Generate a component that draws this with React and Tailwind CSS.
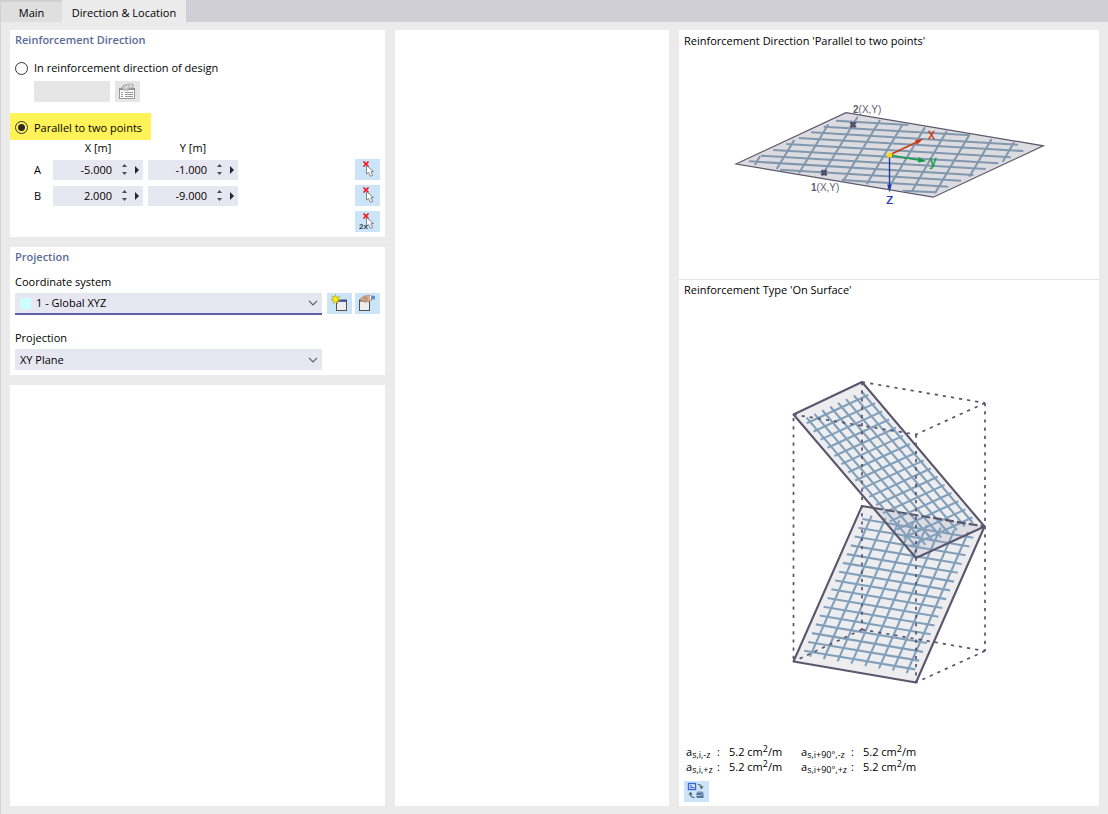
import React from "react";

const range = (n) => Array.from({ length: n }, (_, i) => i);

function Panel({ className = "", children, ...rest }) {
  return (
    <section className={`bg-white ${className}`} {...rest}>
      {children}
    </section>
  );
}

function PanelTitle({ children }) {
  return <h2 className="text-[11px] leading-[19px] font-semibold text-[#5b6c98]">{children}</h2>;
}

function IconButton({ label, disabled = false, children }) {
  return (
    <button
      type="button"
      aria-label={label}
      disabled={disabled}
      className="flex h-[21px] w-[25px] shrink-0 items-center justify-center bg-[#cce4f7] disabled:bg-[#e6e6e6]"
    >
      {children}
    </button>
  );
}

function PickIcon({ twice = false }) {
  return (
    <svg width="25" height="21" viewBox="0 0 25 21" aria-hidden="true">
      <path d="M8.500 2.500l5 5M13.500 2.500l-5 5" stroke="#f7a3a8" strokeWidth="2.200" />
      <path d="M8.500 2.500l5 5M13.500 2.500l-5 5" stroke="#e0101c" strokeWidth="1.200" />
      <path d="M11.500 6.500v8.500l2-1.500 2 3.800 2.200-1-1.900-3.600 2.700-.200z" fill="#fff" stroke="#85858d" strokeWidth="1" />
      {twice && (
        <text x="4" y="18" fontSize="8" fontWeight="700" fill="#3b4450" fontFamily="Liberation Sans, sans-serif">
          2x
        </text>
      )}
    </svg>
  );
}

function NewWindowIcon() {
  return (
    <svg width="25" height="21" viewBox="0 0 25 21" aria-hidden="true">
      <rect x="9.500" y="7.500" width="10" height="10" fill="#ededed" stroke="#55514f" />
      <path d="M9 7.500h11" stroke="#55514f" strokeWidth="2" />
      <path d="M11 8h8" stroke="#3b49c4" strokeWidth="1.400" />
      <path d="M8.500 1.500l1.100 3 3-1.200-1.600 2.600 2.500 1.300-3 .400.300 3-2.100-2.100-2.200 1.900.300-3-2.800-.500 2.500-1.300-1.500-2.400 2.700.900z" fill="#fff200" stroke="#a8981c" strokeWidth=".6" />
    </svg>
  );
}

function EditWindowIcon() {
  return (
    <svg width="25" height="21" viewBox="0 0 25 21" aria-hidden="true">
      <rect x="4.500" y="7.500" width="10" height="10" fill="#ededed" stroke="#55514f" />
      <path d="M4 7.500h11" stroke="#55514f" strokeWidth="2" />
      <path d="M5 6l4-3 6-.500 2 1v3.500l-2 .500-1 1.500-2-.500-2 1-1-2-3 .500z" fill="#d9ae8c" stroke="#96755e" strokeWidth=".6" />
      <path d="M8 5.500l4-1M10 7.500l3-1.500" stroke="#8b6a55" strokeWidth=".7" />
      <path d="M16 2.500l4 .500v3.500l-4-.500z" fill="#5c8fd6" />
      <path d="M15.500 2.500v4" stroke="#fff" strokeWidth="1" />
    </svg>
  );
}

function LibraryIcon() {
  return (
    <svg width="25" height="21" viewBox="0 0 25 21" aria-hidden="true">
      <rect x="4.500" y="7.500" width="15" height="10" fill="#fafafa" stroke="#999" />
      <path d="M4 8h16" stroke="#8f8f8f" strokeWidth="2" />
      <path d="M6 11.500h2M6 13.500h2M6 15.500h2M10 11.500h8M10 13.500h8M10 15.500h8" stroke="#999" strokeWidth="1" />
      <path d="M6 7l3-3 5-1 4 0v4l-4 .500-1 2-2-.500-2 .500-1-1.500z" fill="#c4c4c4" stroke="#989898" strokeWidth=".6" />
      <path d="M10 7l3-2M16 3v3.500" stroke="#f4f4f4" strokeWidth="1" />
    </svg>
  );
}

function SwitchViewIcon() {
  return (
    <svg width="25" height="21" viewBox="0 0 25 21" aria-hidden="true">
      <rect x="4.500" y="2.500" width="7" height="6" fill="#dcebff" stroke="#3a63d8" strokeWidth="1.400" />
      <path d="M7 4v2.500h3" fill="none" stroke="#3a63d8" strokeWidth="1.200" />
      <path d="M14 3.500c2.500 0 3.500 1 3.500 3" fill="none" stroke="#56606e" strokeWidth="1.200" />
      <path d="M15.300 5.500h4.400l-2.200 2.800z" fill="#56606e" />
      <path d="M6.500 13c0 2 1 3.500 4 3.500" fill="none" stroke="#56606e" strokeWidth="1.200" />
      <path d="M4.300 13.500h4.400l-2.200-2.800z" fill="#56606e" />
      <path d="M13 10.500h5l1.500 1.500v5h-6l-1.500-1.500z" fill="#56749f" />
      <path d="M12 14.500h5l2.500-2.500M13 11h5" fill="none" stroke="#c3d2e8" strokeWidth=".8" />
    </svg>
  );
}

function NumberField({ label, value }) {
  return (
    <div className="flex h-5 w-[90px] items-center bg-[#e7e7f1]">
      <input
        type="text"
        aria-label={label}
        defaultValue={value}
        className="h-5 w-[59px] bg-transparent text-right outline-none"
      />
      <div className="ml-2 flex w-2 flex-col items-center gap-1">
        <button type="button" aria-label={`Increase ${label}`} className="flex h-1 w-2 items-center justify-center">
          <svg width="5" height="3" viewBox="0 0 5 3" aria-hidden="true">
            <path d="M0 3L2.500 0 5 3z" fill="#4a4a52" />
          </svg>
        </button>
        <button type="button" aria-label={`Decrease ${label}`} className="flex h-1 w-2 items-center justify-center">
          <svg width="5" height="3" viewBox="0 0 5 3" aria-hidden="true">
            <path d="M0 0L2.500 3 5 0z" fill="#4a4a52" />
          </svg>
        </button>
      </div>
      <button type="button" aria-label={`More options for ${label}`} className="ml-[5px] flex h-5 w-2 items-center justify-center">
        <svg width="4" height="8" viewBox="0 0 4 8" aria-hidden="true">
          <path d="M0 0l4 4-4 4z" fill="#26262c" />
        </svg>
      </button>
    </div>
  );
}

function PointRow({ name, x, y, children }) {
  return (
    <div className="flex items-center gap-[5px] pl-[19px]">
      <div className="flex items-center">
        <span className="w-[19px]">{name}</span>
        <NumberField label={`${name} X [m]`} value={x} />
      </div>
      <NumberField label={`${name} Y [m]`} value={y} />
      <span className="flex-1" />
      {children}
    </div>
  );
}

function SelectBox({ id, options, swatch = false, className = "" }) {
  return (
    <div className={`relative flex w-[307px] items-center bg-[#e7e7f1] ${className}`}>
      {swatch && <span className="ml-[5px] h-[11px] w-[11px] shrink-0 bg-[#ccffff]" />}
      <select id={id} className="h-full w-full appearance-none bg-transparent px-[5px] outline-none">
        {options.map((o) => (
          <option key={o}>{o}</option>
        ))}
      </select>
      <svg className="pointer-events-none absolute right-1 h-[6px] w-[10px]" viewBox="0 0 10 6" aria-hidden="true">
        <path d="M1 .8l4 4 4-4" fill="none" stroke="#5c5c66" strokeWidth="1.200" />
      </svg>
    </div>
  );
}

function Radio({ id, label, ...rest }) {
  return (
    <span className="inline-flex items-center gap-[6px]">
      <input
        id={id}
        type="radio"
        name="direction"
        className="flex h-[13px] w-[13px] appearance-none items-center justify-center rounded-full border border-[#333] bg-white before:h-[7px] before:w-[7px] before:rounded-full checked:bg-[#fff25e] checked:before:bg-[#2e2c18]"
        {...rest}
      />
      <label htmlFor={id}>{label}</label>
    </span>
  );
}

const SLAB_ROWS = [
  [836, 120.7, 908.3, 125], [823.7, 126.7, 970, 135.3], [811, 132.3, 1018, 144.8], [798.7, 138, 1023.3, 151],
  [786.3, 144, 1010.7, 157.3], [773.3, 150, 998.3, 163.3], [761, 155.7, 985.7, 169], [749, 161.3, 973.3, 175],
  [780, 169.7, 961, 180.7], [841.7, 180, 948.3, 186.7], [902.7, 190.7, 935.7, 192.3],
];
const SLAB_COLS = [
  [760, 156, 755, 165], [794.3, 140, 776.7, 169], [828.3, 124.3, 799, 173.3], [857.7, 116.7, 824, 172.3],
  [880, 120, 843.3, 181], [902.3, 125, 866.7, 184.3], [925, 127.3, 888, 189], [946.7, 131, 911.7, 191.7],
  [969.3, 135, 935, 193.3], [991.7, 139, 969.3, 176.7], [1014, 142.3, 1002.7, 161.7],
];

function Segments({ items }) {
  return <path d={items.map(([a, b, c, d]) => `M${a} ${b}L${c} ${d}`).join("")} />;
}

function SlabFigure() {
  return (
    <svg className="mx-auto block h-[110px] w-[320px]" viewBox="729 98 320 110" role="img" aria-label="Reinforcement parallel to two points">
      <path d="M736 164L846 112.700 1043.300 145.800 933.300 197.200z" fill="#dcdce0" stroke="#5b566b" strokeWidth="1.200" />
      <g stroke="#8197ae" strokeWidth="2.100" fill="none">
        <Segments items={SLAB_ROWS} />
        <Segments items={SLAB_COLS} />
      </g>
      <path d="M850.500 122.200l5 5M855.500 122.200l-5 5M821.500 170.200l5 5M826.500 170.200l-5 5" stroke="#55506a" strokeWidth="3" />
      <g strokeWidth="1.400" fill="none">
        <path d="M889.500 155V189" stroke="#1f3ca6" />
        <path d="M889.500 155L918 160" stroke="#0f9b46" />
        <path d="M889.500 155L916 142.500" stroke="#c93a10" />
      </g>
      <path d="M887.200 184.500h4.600l-2.300 8z" fill="#1f3ca6" />
      <path d="M918.500 157.300l8 3.900-8.500 1.200z" fill="#0f9b46" />
      <path d="M915 140.300l8.500-1.600-6.300 5.900z" fill="#c93a10" />
      <circle cx="889.500" cy="155" r="2.600" fill="#ffdc00" />
      <g fontFamily="Liberation Sans, sans-serif">
        <g fontSize="10" fill="#625d70">
          <text x="853" y="113"><tspan fontWeight="700">2</tspan>(X,Y)</text>
          <text x="811" y="191"><tspan fontWeight="700">1</tspan>(X,Y)</text>
        </g>
        <text x="928" y="139" fontSize="14" fill="#c93a10" stroke="#c93a10" strokeWidth=".3">x</text>
        <text x="929.500" y="166" fontSize="14" fill="#0f9b46" stroke="#0f9b46" strokeWidth=".3">y</text>
        <text x="886" y="204" fontSize="15" fill="#1f3cb6" stroke="#1f3cb6" strokeWidth=".2">z</text>
      </g>
    </svg>
  );
}

const UPPER_SHORT = range(16).map((i) => {
  const x = 868.3 + 6.93 * i;
  const y = 395 + 8.17 * i;
  return [x, y, x - 61.6, y + 28.3];
});
const UPPER_LONG = range(8).map((i) => {
  const x = 861.7 - 7.87 * i;
  const y = 391.7 + 3.7 * i;
  return [x, y, x + 111, y + 131];
});
const LOWER_SHORT = range(16).map((i) => {
  const x = 862.3 - 3.87 * i;
  const y = 519 + 8.78 * i;
  return [x, y, x + 111, y + 18.7];
});
const LOWER_LONG = range(8).map((i) => {
  const x = 871.7 + 13.8 * i;
  const y = 515.7 + 2.33 * i;
  return [x, y, x - 61.7, y + 141];
});

function BoxFigure() {
  return (
    <svg className="mx-auto block h-[312px] w-[210px]" viewBox="784 376 210 312" role="img" aria-label="Reinforcement on surface">
      <path d="M862 506L984.500 526.500 916 682.500 793.500 661.500z" fill="#ededef" />
      <path d="M862 382L984.500 526.500 916 558 793.500 414.500z" fill="#ededef" />
      <path d="M874 508.300L984.500 526.500 916 558z" fill="#dcdce2" />
      <g stroke="#829fba" strokeWidth="2.100" fill="none">
        <Segments items={LOWER_SHORT} />
        <Segments items={LOWER_LONG} />
        <Segments items={UPPER_SHORT} />
        <Segments items={UPPER_LONG} />
      </g>
      <g stroke="#57526a" strokeWidth="1.700" strokeDasharray="3.200 5" fill="none">
        <path d="M862 382L985 403" />
        <path d="M985 403L916 434.500" />
        <path d="M793.500 414.500L916 434.500" />
        <path d="M793.500 418V661" />
        <path d="M862 382V629.500" />
        <path d="M985 403V651" />
        <path d="M916 434.500V682" />
        <path d="M862 629.500L793.500 661.500" />
        <path d="M862 629.500L985 651" />
        <path d="M985 651L916 682.500" />
      </g>
      <g stroke="#5a566c" strokeWidth="2.100" fill="none" strokeLinejoin="round">
        <path d="M862 382L984.500 526.500 916 558 793.500 414.500z" />
        <path d="M984.500 526.500L916 682.500 793.500 661.500 862 506 874 508" />
        <path d="M874 508L984.500 526.500" strokeDasharray="9 3" />
      </g>
    </svg>
  );
}

function Term({ sub }) {
  return (
    <dt className="flex items-baseline">
      <span>a</span>
      <span className="relative top-[2px] text-[9px]">{sub}</span>
    </dt>
  );
}

function Area() {
  return (
    <dd>
      5.2 cm<sup className="text-[9px]">2</sup>/m
    </dd>
  );
}

function ResultRow({ left, right }) {
  return (
    <>
      <Term sub={left} />
      <span>:</span>
      <Area />
      <Term sub={right} />
      <span>:</span>
      <Area />
    </>
  );
}

export default function App() {
  return (
    <div className="flex min-h-screen flex-col border-l border-[#cfcfd5] bg-[#ebebeb] font-['Open_Sans','Noto_Sans',sans-serif] text-[11px] leading-4 text-black">
      <nav className="flex h-[22px] items-end bg-[#cfcfd5]" role="tablist">
        <button type="button" role="tab" aria-selected="false" className="h-5 w-[61px] bg-[#dfdfdf] pt-px">
          Main
        </button>
        <button type="button" role="tab" aria-selected="true" className="h-[22px] w-[124px] bg-[#ebebeb] pt-1">
          Direction &amp; Location
        </button>
      </nav>
      <main className="grid flex-1 grid-cols-[375fr_274fr_420fr] gap-[10px] px-[9px] py-2">
        <div className="flex flex-col gap-[10px]">
          <Panel className="px-[5px] pb-[5px]">
            <PanelTitle>Reinforcement Direction</PanelTitle>
            <div className="mt-[11px] flex h-4">
              <Radio id="dir-design" label="In reinforcement direction of design" />
            </div>
            <div className="mt-[5px] flex gap-[5px] pl-[19px]">
              <input type="text" aria-label="Design direction" disabled className="h-[21px] w-[76px] bg-[#e6e6e6]" />
              <IconButton label="Reinforcement library" disabled>
                <LibraryIcon />
              </IconButton>
            </div>
            <div className="-ml-[5px] mt-[11px] flex h-[27px] w-[141px] items-center bg-[#fff357] pt-[2px] pl-[5px]">
              <Radio id="dir-parallel" label="Parallel to two points" defaultChecked />
            </div>
            <div className="flex gap-[5px] pl-[38px] text-center">
              <span className="w-[90px]">X [m]</span>
              <span className="w-[90px]">Y [m]</span>
            </div>
            <div className="mt-[3px] flex flex-col gap-[5px]">
              <PointRow name="A" x="-5.000" y="-1.000">
                <IconButton label="Pick point A"><PickIcon /></IconButton>
              </PointRow>
              <PointRow name="B" x="2.000" y="-9.000">
                <IconButton label="Pick point B"><PickIcon /></IconButton>
              </PointRow>
              <div className="flex justify-end">
                <IconButton label="Pick two points"><PickIcon twice /></IconButton>
              </div>
            </div>
          </Panel>
          <Panel className="px-[5px] pb-[5px]">
            <PanelTitle>Projection</PanelTitle>
            <label htmlFor="coord" className="mt-2 block">Coordinate system</label>
            <div className="mt-[3px] flex gap-[5px]">
              <SelectBox id="coord" swatch options={["1 - Global XYZ"]} className="h-[22px] border-b-2 border-[#6160a6]" />
              <div className="flex gap-[3px]">
                <IconButton label="New coordinate system"><NewWindowIcon /></IconButton>
                <IconButton label="Edit coordinate system"><EditWindowIcon /></IconButton>
              </div>
            </div>
            <label htmlFor="projection" className="mt-[15px] block">Projection</label>
            <SelectBox id="projection" options={["XY Plane"]} className="mt-[3px] h-[21px]" />
          </Panel>
          <Panel className="flex-1" />
        </div>
        <Panel />
        <div className="flex flex-col bg-white">
          <section className="border-b border-[#e4e4e4] px-[5px] pt-[3px] pb-[71px]">
            <h2 className="leading-4">Reinforcement Direction 'Parallel to two points'</h2>
            <div className="mt-[49px]">
              <SlabFigure />
            </div>
          </section>
          <section className="flex flex-1 flex-col px-[5px] pt-[2px] pb-1">
            <h2 className="leading-4">Reinforcement Type 'On Surface'</h2>
            <div className="mt-[78px]">
              <BoxFigure />
            </div>
            <dl className="mt-auto grid auto-rows-[15px] grid-cols-[31px_12px_72px_50px_12px_60px] pl-[2px] leading-[15px]">
              <ResultRow left="s,i,-z" right="s,i+90°,-z" />
              <ResultRow left="s,i,+z" right="s,i+90°,+z" />
            </dl>
            <div className="mt-[7px]">
              <IconButton label="Switch view"><SwitchViewIcon /></IconButton>
            </div>
          </section>
        </div>
      </main>
    </div>
  );
}
